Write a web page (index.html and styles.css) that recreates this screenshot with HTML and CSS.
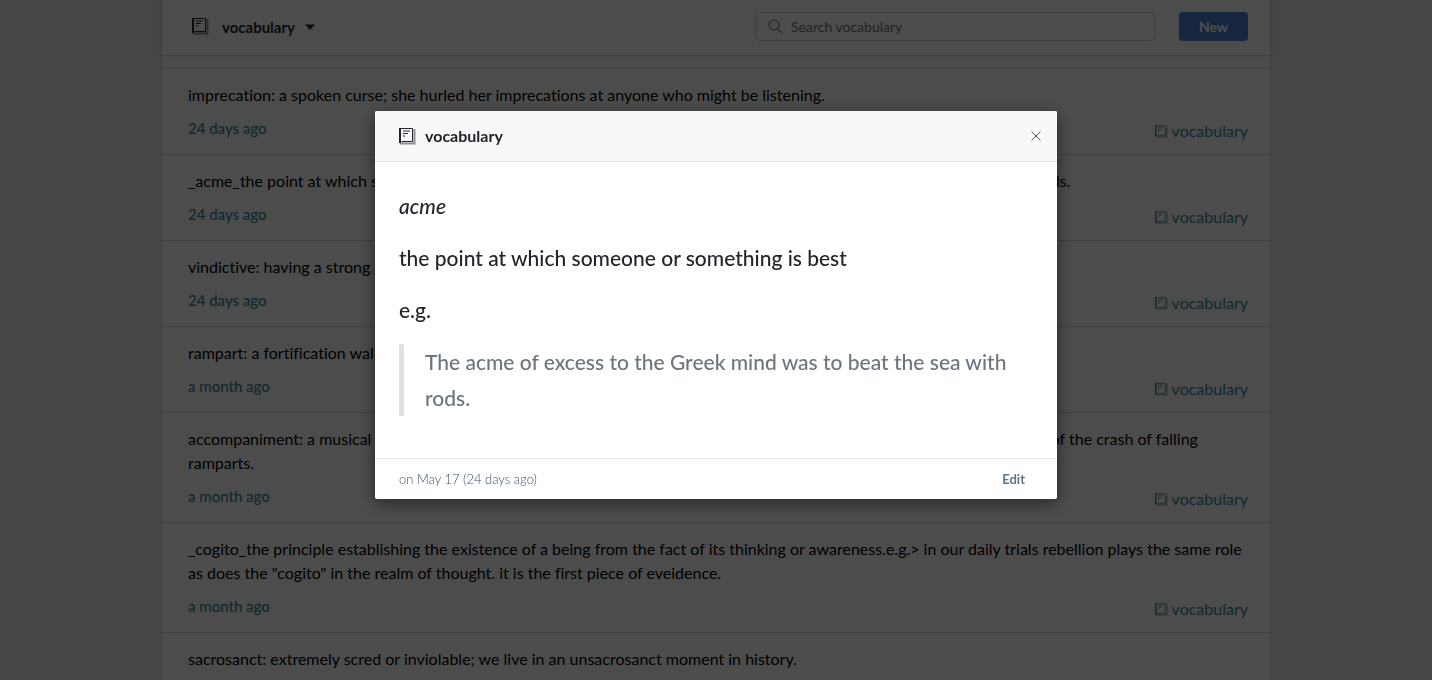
FILE: index.html
```html
<!DOCTYPE html>
<html lang="en">
<head>
    <meta charset="UTF-8">
    <meta name="viewport" content="width=device-width, initial-scale=1.0">
    <title>vocabulary</title>
    <link rel="stylesheet" href="styles.css">
</head>
<body class="modal-open">
    <svg class="sprite" aria-hidden="true">
        <symbol id="book" viewBox="0 0 17 17">
            <path d="M1 15.5H16.5M15.5 1V16" fill="none" stroke="currentColor" stroke-width="2" opacity=".5"/>
            <path d="M1.5 .5H13.5V13.5H2.5" fill="none" stroke="currentColor"/>
            <path d="M1 0V15" stroke="currentColor" stroke-width="2"/>
            <path d="M4 3H11M4 5.5H9M4 8H6" stroke="currentColor"/>
        </symbol>
    </svg>

    <div class="page">
        <header class="topbar">
            <button class="switcher" type="button">
                <svg class="icon"><use href="#book"/></svg>
                <span>vocabulary</span>
                <svg class="caret" viewBox="0 0 10 6"><path d="M0 .5H10L5 6Z" fill="currentColor"/></svg>
            </button>
            <label class="search">
                <svg class="search-icon" viewBox="0 0 16 16"><circle cx="6.5" cy="6.5" r="5.3"/><path d="M10.3 10.3L15 15"/></svg>
                <input type="search" placeholder="Search vocabulary" aria-label="Search vocabulary">
            </label>
            <button class="new-button" type="button">New</button>
        </header>

        <main class="notes">
            <article class="note">
                <p>imprecation: a spoken curse; she hurled her imprecations at anyone who might be listening.</p>
                <div class="meta"><time>24 days ago</time><a href="#"><svg class="icon-small"><use href="#book"/></svg>vocabulary</a></div>
            </article>
            <article class="note">
                <p>_acme_the point at which someone or something is beste.g.&gt; The acme of excess to the Greek mind was to beat sea with rods.</p>
                <div class="meta"><time>24 days ago</time><a href="#"><svg class="icon-small"><use href="#book"/></svg>vocabulary</a></div>
            </article>
            <article class="note">
                <p>vindictive: having a strong desire for revenge</p>
                <div class="meta"><time>24 days ago</time><a href="#"><svg class="icon-small"><use href="#book"/></svg>vocabulary</a></div>
            </article>
            <article class="note">
                <p>rampart: a fortification wall around a castle</p>
                <div class="meta"><time>a month ago</time><a href="#"><svg class="icon-small"><use href="#book"/></svg>vocabulary</a></div>
            </article>
            <article class="note">
                <p>accompaniment: a musical part which supports a voice; the few soldiers sang all night long to the very loud accompaniment of the crash of falling ramparts.</p>
                <div class="meta"><time>a month ago</time><a href="#"><svg class="icon-small"><use href="#book"/></svg>vocabulary</a></div>
            </article>
            <article class="note">
                <p>_cogito_the principle establishing the existence of a being from the fact of its thinking or awareness.e.g.&gt; in our daily trials rebellion plays the same role as does the "cogito" in the realm of thought. it is the first piece of eveidence.</p>
                <div class="meta"><time>a month ago</time><a href="#"><svg class="icon-small"><use href="#book"/></svg>vocabulary</a></div>
            </article>
            <article class="note">
                <p>sacrosanct: extremely scred or inviolable; we live in an unsacrosanct moment in history.</p>
            </article>
        </main>
    </div>

    <div class="overlay">
        <section class="modal" role="dialog" aria-modal="true" aria-labelledby="modal-title">
            <header class="modal-header">
                <svg class="icon"><use href="#book"/></svg>
                <h2 id="modal-title">vocabulary</h2>
                <button class="close" type="button" aria-label="Close">
                    <svg viewBox="0 0 10 10"><path d="M.5 .5L9.5 9.5M9.5 .5L.5 9.5"/></svg>
                </button>
            </header>
            <div class="modal-body">
                <p><em>acme</em></p>
                <p>the point at which someone or something is best</p>
                <p>e.g.</p>
                <blockquote>The acme of excess to the Greek mind was to beat the sea with rods.</blockquote>
            </div>
            <footer class="modal-footer">
                <time>on May 17 (24 days ago)</time>
                <button class="edit" type="button">Edit</button>
            </footer>
        </section>
    </div>
</body>
</html>
```
FILE: styles.css
```css
* {
    box-sizing: border-box;
}
body {
    margin: 0;
    background-color: #e9e9e9;
    color: #000;
    font-family: Lato, sans-serif;
    font-size: 16px;
    line-height: 24px;
    font-variant-ligatures: none;
}
.modal-open {
    overflow: hidden;
    height: 100vh;
}
button, input {
    font-family: inherit;
}
button {
    border: none;
    background: none;
    padding: 0;
    cursor: pointer;
}
p, h2, blockquote {
    margin: 0;
}
.sprite {
    display: none;
}
.icon {
    width: 17px;
    height: 17px;
}
.icon-small {
    width: 13px;
    height: 13px;
}

/* page */
.page {
    max-width: 1110px;
    min-height: 100vh;
    margin: 0 auto;
    background-color: #fff;
    border: solid #d2d2d2;
    border-width: 0 1px;
}
.topbar {
    display: flex;
    align-items: center;
    gap: 24px;
    height: 56px;
    padding: 0 22px 2px 30px;
    border-bottom: 1px solid #d2d2d2;
    box-shadow: 0 2px 12px rgba(0,0,0,0.06);
}
.switcher {
    display: flex;
    align-items: center;
    margin-right: auto;
    color: #212529;
    font-size: 15px;
    font-weight: bold;
}
.switcher span {
    margin: 0 10px 0 13px;
}
.caret {
    width: 10px;
    height: 6px;
}
.search {
    display: flex;
    align-items: center;
    gap: 8px;
    flex: 0 1 400px;
    height: 29px;
    padding: 0 12px;
    border: 1px solid #ccc;
    border-radius: 4px;
}
.search-icon {
    flex: none;
    width: 15px;
    height: 15px;
    fill: none;
    stroke: #868e96;
    stroke-width: 1.5;
}
.search input {
    flex: 1;
    border: none;
    outline: none;
    padding: 0;
    background: none;
    font-size: 14px;
}
.search input::placeholder {
    color: #757575;
}
.new-button {
    width: 69px;
    height: 29px;
    border-radius: 4px;
    background-color: #4a7fd0;
    color: #fff;
    font-size: 14px;
    font-weight: bold;
}
.notes {
    padding-top: 12px;
}
.note {
    padding: 14px 22px 11px 26px;
    border-top: 1px solid #d2d2d2;
}
.meta {
    display: flex;
    justify-content: space-between;
    margin-top: 10px;
    color: #3b8793;
}
.meta time {
    font-size: 15px;
    font-weight: 500;
    line-height: 22px;
}
.meta a {
    display: flex;
    align-items: center;
    gap: 4px;
    padding-top: 2px;
    color: inherit;
    text-decoration: none;
}

/* modal */
.overlay {
    position: fixed;
    inset: 0;
    padding: 111px 20px 20px;
    background-color: rgba(0,0,0,0.7);
}
.modal {
    max-width: 682px;
    margin: 0 auto;
    background-color: #fff;
    border-radius: 2px;
    box-shadow: 0 4px 18px rgba(0,0,0,0.5);
    color: #212529;
    overflow: hidden;
}
.modal-header {
    display: flex;
    align-items: center;
    gap: 9px;
    height: 51px;
    padding: 0 16px 0 24px;
    background-color: #f7f8fa;
    border-bottom: 1px solid #e4e7ea;
}
.modal-header h2 {
    font-size: 16px;
}
.close {
    display: flex;
    margin-left: auto;
}
.close svg {
    width: 10px;
    height: 10px;
    fill: none;
    stroke: #555;
}
.modal-body {
    display: grid;
    gap: 16px;
    padding: 26px 24px 42px;
    font-size: 21px;
    font-weight: 500;
    line-height: 36px;
}
.modal-body blockquote {
    padding: 0 21px;
    border-left: 5px solid #dee2e6;
    color: #6c757d;
}
.modal-footer {
    display: flex;
    align-items: center;
    justify-content: space-between;
    height: 41px;
    padding: 0 32px 0 24px;
    border-top: 1px solid #e5e7e9;
    color: #5f7385;
    font-size: 13px;
}
.modal-footer time {
    color: #3c5064;
    font-weight: 300;
}
.edit {
    color: inherit;
    font-size: 13px;
    font-weight: bold;
}
```
